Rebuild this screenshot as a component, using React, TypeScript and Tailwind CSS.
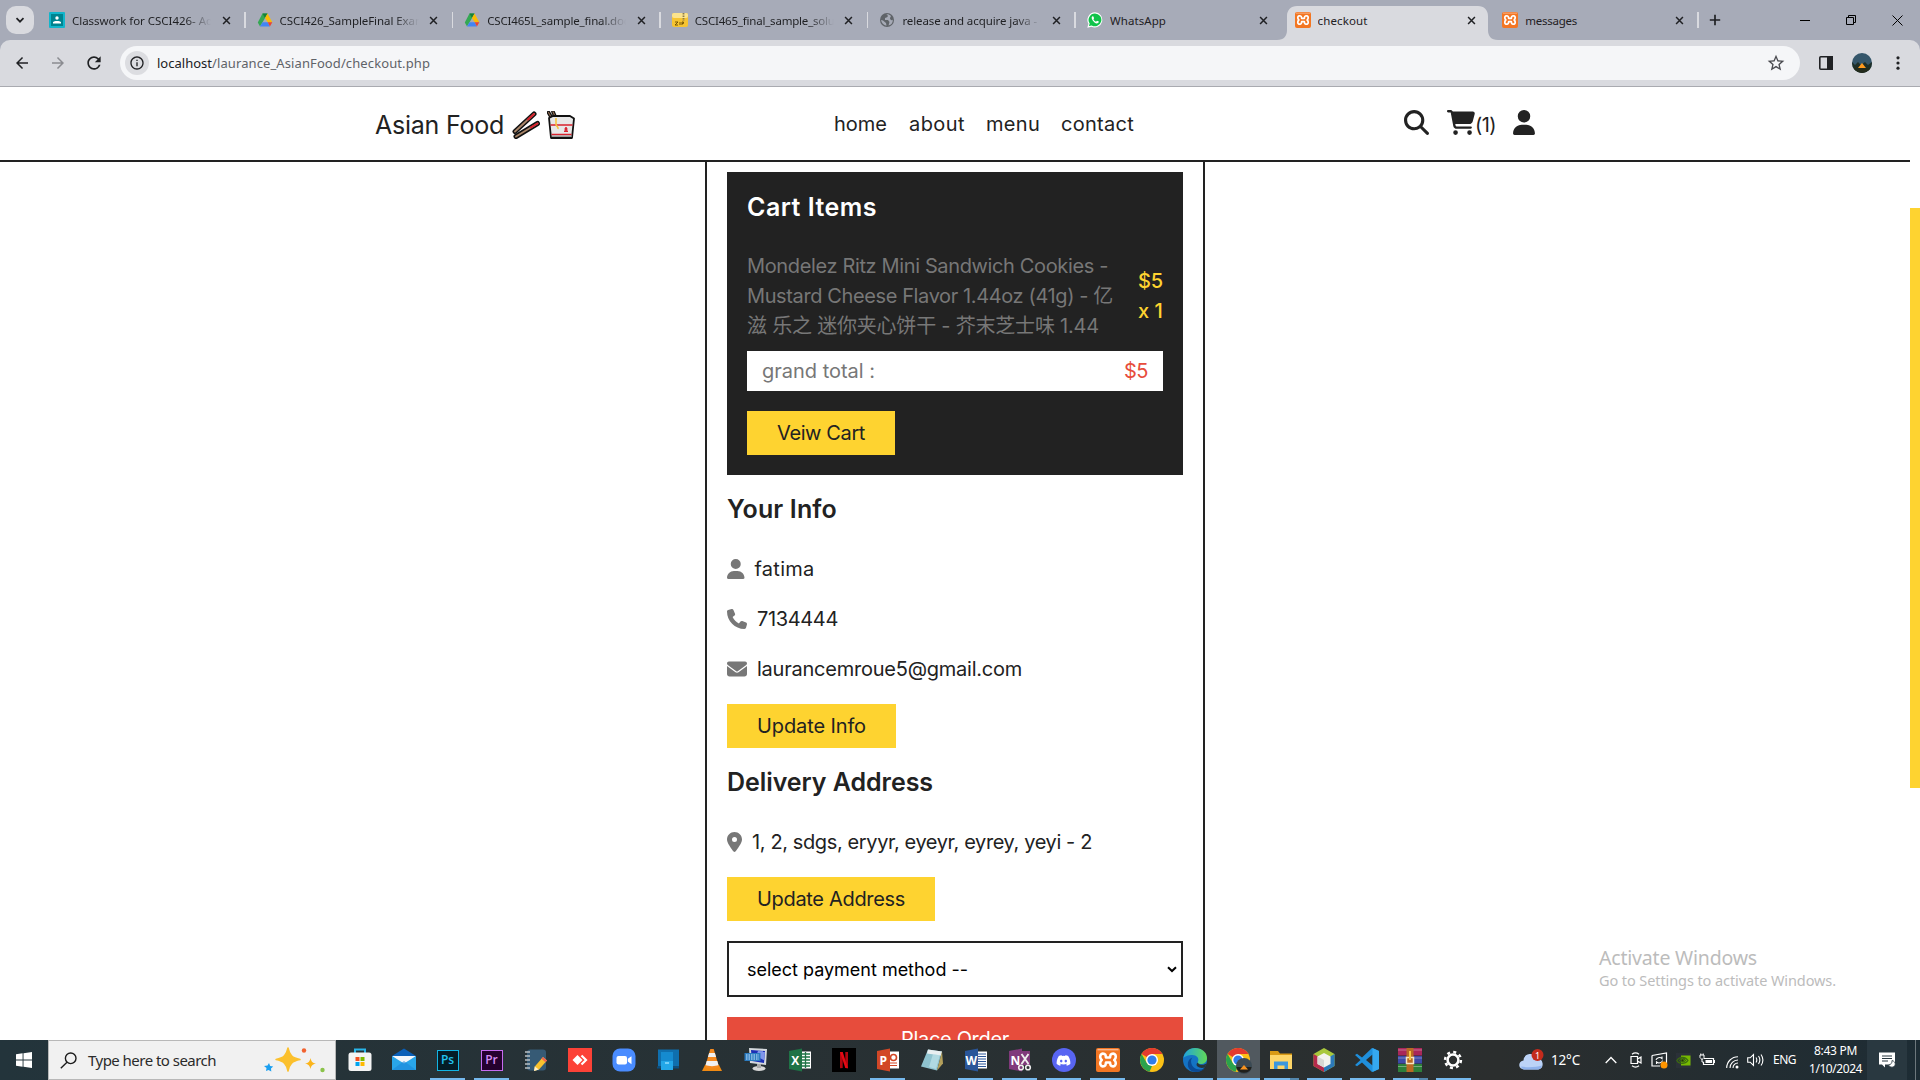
import React, { useLayoutEffect, useRef, useState } from "react";
import {
  FaMagnifyingGlass,
  FaCartShopping,
  FaUser,
  FaPhone,
  FaEnvelope,
  FaLocationDot,
  FaDiscord,
} from "react-icons/fa6";
import { MdArrowBack, MdArrowForward, MdRefresh, MdStarOutline, MdInfoOutline } from "react-icons/md";

/** One line of text whose tracking is adjusted so that it fills a given width. */
function Fit({ w, className = "", children }: { w: number; className?: string; children: string }) {
  const ref = useRef<HTMLSpanElement>(null);
  const [track, setTrack] = useState(0);
  useLayoutEffect(() => {
    const el = ref.current;
    if (!el) return;
    const natural = el.getBoundingClientRect().width - track * children.length;
    setTrack((w - natural) / children.length);
  }, [w, children]);
  return (
    <span ref={ref} className={"inline-block shrink-0 whitespace-pre " + className} style={{ letterSpacing: track + "px" }}>
      {children}
    </span>
  );
}

/* ---------- Favicons ---------- */

const Classroom = () => (
  <svg viewBox="0 0 16 16" className="size-4">
    <rect width="16" height="16" rx="1" fill="#12b5cb" />
    <rect x="2" y="2" width="12" height="12" fill="#00838f" />
    <circle cx="8" cy="6" r="1.700" fill="#fff" />
    <path d="M4 11.500V10C5 8.500 11 8.500 12 10v1.500z" fill="#fff" />
  </svg>
);
const Drive = () => (
  <svg viewBox="0 0 16 16" className="size-4">
    <path d="M5.500 1.500h5L6 9.500 3 14.500.8 10.500z" fill="#34a853" />
    <path d="M5.500 1.500h5l-2.500 4.500z" fill="#188038" />
    <path d="M10.500 1.500 15.300 10.300h-4.600L8 6z" fill="#fbbc04" />
    <path d="M5.500 10.300h5.200l2.200 4.200H3z" fill="#4285f4" />
    <path d="M10.700 10.300h4.600l-2.400 4.200z" fill="#ea4335" />
  </svg>
);
const Zip = () => (
  <svg viewBox="0 0 16 16" className="size-4">
    <rect x="0" y="1" width="16" height="14" rx="2" fill="#f6c431" />
    <rect x="0" y="1" width="16" height="5" rx="2" fill="#fbe38d" />
    <path d="M11.500 1v8" stroke="#8a7a4a" strokeWidth="1.800" strokeDasharray="1.500 1" />
    <path d="M3 10h3l-3 3h3M8 10v3M10 13v-3h1.500v1.500H10" stroke="#6b4d00" fill="none" strokeWidth=".9" />
  </svg>
);
const Globe = () => (
  <svg viewBox="0 0 16 16" className="size-4">
    <circle cx="8" cy="8" r="7" fill="#5f6368" />
    <path d="M7 2.300c2 .7 2.500 2 1 3l-2 .7v2h3l1.500 2-1 3.500c3-.5 4.500-3 4.300-6C13 9 11 8 11 6l1-2C10.500 2.500 9 2 7 2.300zM2 8c.5 3 2.500 5.300 5.500 5.800L7 11 4 8.500z" fill="#a6aab6" />
  </svg>
);
const WhatsFav = () => (
  <svg viewBox="0 0 16 16" className="size-4">
    <path d="M8 .3a7.600 7.600 0 0 0-6.500 11.500L.3 15.700l4-1A7.600 7.600 0 1 0 8 .3z" fill="#fff" />
    <path d="M8 1.500a6.400 6.400 0 0 0-5.300 10l-.8 2.600 2.800-.7A6.400 6.400 0 1 0 8 1.500z" fill="#10c34a" />
    <path d="M5.400 4.300c-1 .7-1 2.100 0 3.700 1.300 2.200 3.500 3.800 5.200 3.300 1-.4 1.300-1 1.200-1.700L10 8.700l-1 1C7.800 9.200 6.900 8.300 6.400 7.200l.7-.9-.7-1.900z" fill="#fff" />
  </svg>
);
const Xampp = ({ big = false }: { big?: boolean }) => (
  <span className={"flex items-center justify-center rounded-[2px] bg-[#f37623] text-white " + (big ? "size-6" : "size-4")}>
    <svg viewBox="0 0 24 24" className={big ? "size-6" : "size-4"}>
      <path d="M1.500 1.700h21" stroke="#f9b48a" strokeWidth="1.400" />
      <path
        d="M8.500 6C6 5 4.200 6.400 4.200 8.800c0 1.300.6 2.400 1.600 3.200-1 .8-1.600 1.900-1.600 3.200 0 2.400 1.800 3.800 4.300 2.800 1.500-.6 1.300-2.400 1.500-3.500h4c.2 1.100 0 2.900 1.500 3.500 2.500 1 4.300-.4 4.300-2.800 0-1.300-.6-2.400-1.600-3.200 1-.8 1.600-1.900 1.600-3.200C19.800 6.400 18 5 15.500 6c-1.500.6-1.300 2.400-1.500 3.500h-4C9.800 8.400 10 6.600 8.500 6z"
        fill="none"
        stroke="#fff"
        strokeWidth="2.600"
        strokeLinejoin="round"
      />
    </svg>
  </span>
);

const Cross = ({ className = "" }: { className?: string }) => (
  <svg viewBox="0 0 10 10" className={className}>
    <path d="M1.200 1.200l7.600 7.600M8.800 1.200l-7.600 7.600" stroke="#202124" strokeWidth="1.700" />
  </svg>
);

/* ---------- Browser chrome ---------- */

type TabData = { icon: React.ReactNode; title: string; w: number; fade?: boolean; sep?: boolean; active?: boolean };

const tabs: TabData[] = [
  { icon: <Classroom />, title: "Classwork for CSCI426- Ad", w: 141, fade: true, sep: true },
  { icon: <Drive />, title: "CSCI426_SampleFinal Exam", w: 146, fade: true, sep: true },
  { icon: <Drive />, title: "CSCI465L_sample_final.doc", w: 142, fade: true, sep: true },
  { icon: <Zip />, title: "CSCI465_final_sample_solu", w: 140, fade: true, sep: true },
  { icon: <Globe />, title: "release and acquire java - G", w: 146, fade: true, sep: true },
  { icon: <WhatsFav />, title: "WhatsApp", w: 56 },
  { icon: <Xampp />, title: "checkout", w: 50, active: true },
  { icon: <Xampp />, title: "messages", w: 52, sep: true },
];

function Tab({ t }: { t: TabData }) {
  return (
    <div className="relative flex h-10 w-[207.6px] shrink-0 items-center pl-[12px]">
      {t.active && (
        <svg viewBox="0 0 222 34" className="absolute -left-[6px] top-[6px] h-[34px] w-[222px]">
          <path d="M0 34C7 34 10 30 10 24V10C10 4 14 0 20 0H201C207 0 211 4 211 10V24C211 30 214 34 221 34z" fill="#d9dadf" />
        </svg>
      )}
      <span className="relative">{t.icon}</span>
      <div
        className={
          "relative ml-[7px] w-[139px] overflow-hidden pt-px text-[11.500px] leading-5 text-[#1f2023] " +
          (t.fade ? "[mask-image:linear-gradient(to_right,black_82%,transparent_100%)]" : "")
        }
      >
        <Fit w={t.w}>{t.title}</Fit>
      </div>
      <Cross className="relative ml-[10.5px] size-[9px]" />
      {t.sep && <span className="ml-auto h-4 w-[1.500px] translate-x-px bg-[#d9dadf]" />}
    </div>
  );
}

function BrowserChrome() {
  return (
    <div className="h-[87px] shrink-0 bg-[#a7abb8] font-['Noto_Sans',sans-serif]">
      <div className="flex h-10 items-center">
        <div className="ml-[6px] flex size-7 items-center justify-center rounded-[10px] bg-[#d9dadf]">
          <svg viewBox="0 0 10 10" className="size-[10px]">
            <path d="M1.500 3.200L5 6.700l3.500-3.500" fill="none" stroke="#202124" strokeWidth="1.700" />
          </svg>
        </div>
        <div className="ml-[3px] flex">
          {tabs.map((t, i) => (
            <Tab key={i} t={t} />
          ))}
        </div>
        <svg viewBox="0 0 12 12" className="ml-[11px] size-3">
          <path d="M6 .8v10.400M.8 6h10.400" stroke="#202124" strokeWidth="1.700" />
        </svg>
        <svg viewBox="0 0 10 10" className="ml-auto mr-9 size-[10px]">
          <path d="M0 5.500h10" stroke="#000" />
        </svg>
        <svg viewBox="0 0 10 10" className="mr-9 size-[10px]">
          <path d="M.5 2.500h7v7h-7zM2.500 2.500v-2h7v7h-2" fill="none" stroke="#000" />
        </svg>
        <svg viewBox="0 0 11 11" className="mr-[17px] size-[11px]">
          <path d="M.5 .5l10 10M10.500 .5l-10 10" stroke="#000" />
        </svg>
      </div>
      <div className="flex h-[47px] items-center rounded-t-[10px] border-b border-[#a9aab0] bg-[#d9dadf]">
        <MdArrowBack className="ml-[13px] size-[18px] text-[#202124]" />
        <MdArrowForward className="ml-[18px] size-[18px] text-[#8b8c91]" />
        <MdRefresh className="ml-[17px] size-[20px] text-[#202124]" />
        <div className="ml-[16px] flex h-[34px] w-[1680px] items-center rounded-full bg-[#f5f6f8]">
          <span className="ml-[5px] flex size-6 items-center justify-center rounded-full bg-[#dcdde1]">
            <MdInfoOutline className="size-4 text-[#202124]" />
          </span>
          <span className="ml-[8px] flex text-[13px] leading-5 text-[#5f6368]">
            <Fit w={55} className="text-[#202124]">localhost</Fit>
            <Fit w={218}>/laurance_AsianFood/checkout.php</Fit>
          </span>
          <MdStarOutline className="ml-auto mr-[14px] size-5 text-[#4a4b50]" />
        </div>
        <svg viewBox="0 0 14 14" className="ml-[19px] size-[14px]">
          <rect x=".8" y=".8" width="12.400" height="12.400" rx="1" fill="none" stroke="#202124" strokeWidth="1.600" />
          <path d="M8 0h6v14H8z" fill="#202124" />
        </svg>
        <svg viewBox="0 0 20 20" className="ml-[19px] size-5">
          <clipPath id="avatar">
            <circle cx="10" cy="10" r="10" />
          </clipPath>
          <g clipPath="url(#avatar)">
            <rect width="20" height="20" fill="#35566b" />
            <path d="M0 9l3 3 3-3 3 3 4-3 3 3 4-3v11H0z" fill="#1f2f28" />
            <path d="M10 10l4 5H6z" fill="#ff9a1f" />
            <rect y="15" width="20" height="5" fill="#232b1c" />
          </g>
        </svg>
        <svg viewBox="0 0 4 14" className="ml-[24px] h-[14px] w-1">
          <circle cx="2" cy="1.800" r="1.600" fill="#202124" />
          <circle cx="2" cy="7" r="1.600" fill="#202124" />
          <circle cx="2" cy="12.200" r="1.600" fill="#202124" />
        </svg>
      </div>
    </div>
  );
}

/* ---------- Shop page ---------- */

const Chopsticks = () => (
  <svg viewBox="0 0 28 28" className="size-7">
    <g strokeLinecap="round">
      <path d="M22 3L3 20.500" stroke="#111" strokeWidth="5" />
      <path d="M25.500 12.500L4 25.500" stroke="#111" strokeWidth="5" />
      <path d="M22 3L3 20.500" stroke="#a88467" strokeWidth="1.900" />
      <path d="M25.500 12.500L4 25.500" stroke="#a88467" strokeWidth="1.900" />
      <path d="M22 3l-6 5.500M25.500 12.500l-6.500 3.900" stroke="#d9222e" strokeWidth="2" />
    </g>
  </svg>
);
const Takeout = () => (
  <svg viewBox="0 0 28 28" className="size-7">
    <path d="M1.500 1.500l4 7M6 .8l3 7" stroke="#111" strokeWidth="3.600" strokeLinecap="round" />
    <path d="M1.500 1.500l4 7M6 .8l3 7" stroke="#8d6a50" strokeWidth="1.200" strokeLinecap="round" />
    <path d="M2 7l4-2h17l4 2.500L25 27H4z" fill="#e8e8e8" stroke="#111" strokeWidth="1.800" strokeLinejoin="round" />
    <path d="M3.500 14h22M4.500 23.500h20" stroke="#d9222e" strokeWidth="1.300" />
    <path d="M5 24.500h19.500v1.500H5z" fill="#9b9b9b" />
    <path d="M9 7v6c0 3 2.500 2 2 5" stroke="#f5c542" strokeWidth="1.600" fill="none" />
    <path d="M19 16v5M17 20.300h4M17.500 18h3" stroke="#d9222e" strokeWidth="1.600" />
  </svg>
);

function Header() {
  return (
    <header className="flex h-[75px] w-[1910px] shrink-0 items-center border-b-2 border-[#222] bg-white text-[#222]">
      <div className="ml-[375px] flex w-[200px] items-center pt-[3px]">
        <Fit w={129} className="text-[25px] leading-8">Asian Food</Fit>
        <span className="ml-[8px]"><Chopsticks /></span>
        <span className="ml-[7px]"><Takeout /></span>
      </div>
      <nav className="ml-[259px] flex pt-px text-[20px] leading-[30px]">
        <Fit w={53} className="mr-[22px]">home</Fit>
        <Fit w={56} className="mr-[21px]">about</Fit>
        <Fit w={54} className="mr-[21px]">menu</Fit>
        <Fit w={73}>contact</Fit>
      </nav>
      <div className="ml-[270px] flex items-center pb-[2px]">
        <FaMagnifyingGlass className="size-[25px]" />
        <FaCartShopping className="ml-[18px] h-[25px] w-[28px]" />
        <Fit w={21} className="mt-[5px] text-[20px] leading-[30px]">(1)</Fit>
        <FaUser className="ml-[17px] h-[25px] w-[22px]" />
      </div>
    </header>
  );
}

const Heading = ({ w, children, className = "" }: { w: number; children: string; className?: string }) => (
  <h3 className={"flex h-[30px] text-[25px] font-semibold leading-[30px] " + className}>
    <Fit w={w}>{children}</Fit>
  </h3>
);

const YellowButton = ({ w, children }: { w: number; children: string }) => (
  <button className="flex h-11 items-center bg-[#fed330] px-[30px] text-[20px] leading-6 text-[#222]">
    <Fit w={w}>{children}</Fit>
  </button>
);

const InfoRow = ({ icon, w, children }: { icon: React.ReactNode; w: number; children: string }) => (
  <p className="mb-5 flex h-[30px] items-center gap-[10px] text-[20px] leading-[30px] text-[#222]">
    <span className="-mt-px text-[#777]">{icon}</span>
    <Fit w={w}>{children}</Fit>
  </p>
);

function Checkout() {
  return (
    <section className="ml-[705px] w-[500px] border-x-2 border-[#222] px-5 pt-[10px]">
      <div className="h-[303px] bg-[#222] p-5">
        <Heading w={130} className="text-white">Cart Items</Heading>
        <div className="mt-[29px] flex items-center justify-between text-[20px] leading-[30px]">
          <div className="flex flex-col items-start text-[#777]">
            <Fit w={361}>Mondelez Ritz Mini Sandwich Cookies -</Fit>
            <Fit w={366} className="h-[30px] font-['Inter','Noto_Sans_CJK_SC',sans-serif]">Mustard Cheese Flavor 1.44oz (41g) - 亿</Fit>
            <Fit w={352} className="h-[30px] font-['Inter','Noto_Sans_CJK_SC',sans-serif]">滋 乐之 迷你夹心饼干 - 芥末芝士味 1.44</Fit>
          </div>
          <div className="flex flex-col items-end font-medium text-[#fed330]">
            <Fit w={25}>$5</Fit>
            <Fit w={25}>x 1</Fit>
          </div>
        </div>
        <div className="mt-[10px] flex h-10 items-center justify-between bg-white px-[15px] text-[20px] leading-[30px]">
          <Fit w={113} className="text-[#777]">grand total :</Fit>
          <Fit w={24} className="text-[#e74c3c]">$5</Fit>
        </div>
        <div className="mt-5 flex">
          <YellowButton w={88}>Veiw Cart</YellowButton>
        </div>
      </div>
      <Heading w={110} className="mb-[30px] mt-[19px] text-[#222]">Your Info</Heading>
      <InfoRow icon={<FaUser className="h-5 w-[17.500px]" />} w={60}>fatima</InfoRow>
      <InfoRow icon={<FaPhone className="size-5" />} w={81}>7134444</InfoRow>
      <InfoRow icon={<FaEnvelope className="size-5" />} w={265}>laurancemroue5@gmail.com</InfoRow>
      <div className="flex">
        <YellowButton w={109}>Update Info</YellowButton>
      </div>
      <Heading w={206} className="mb-[30px] mt-[19px] text-[#222]">Delivery Address</Heading>
      <InfoRow icon={<FaLocationDot className="h-5 w-[15px]" />} w={340}>1, 2, sdgs, eryyr, eyeyr, eyrey, yeyi - 2</InfoRow>
      <div className="flex">
        <YellowButton w={148}>Update Address</YellowButton>
      </div>
      <div className="mt-5 flex h-14 items-center border-2 border-[#222] pl-[18px] pr-[4px] text-[18px] text-black">
        <Fit w={221}>select payment method --</Fit>
        <svg viewBox="0 0 10 7" className="ml-auto h-[7px] w-[10px]">
          <path d="M1 1.200l4 3.800 4-3.800" fill="none" stroke="#000" strokeWidth="2" />
        </svg>
      </div>
      <button className="mt-5 flex h-11 w-full items-center justify-center bg-[#e74c3c] text-[20px] leading-6 text-white">
        <Fit w={108}>Place Order</Fit>
      </button>
    </section>
  );
}

/* ---------- Taskbar icons ---------- */

const I = ({ children }: { children: React.ReactNode }) => (
  <svg viewBox="0 0 24 24" className="size-6">{children}</svg>
);
const Store = () => (
  <I>
    <path d="M7 6V1.500h10V6" fill="none" stroke="#29b6ea" strokeWidth="2" />
    <rect x=".5" y="4.500" width="23" height="18.500" rx="2.500" fill="#f4f4f4" />
    <path d="M7.500 9h4v4h-4z" fill="#f25022" /><path d="M12.500 9h4v4h-4z" fill="#7fba00" />
    <path d="M7.500 14h4v4h-4z" fill="#00a4ef" /><path d="M12.500 14h4v4h-4z" fill="#ffb900" />
  </I>
);
const Mail = () => (
  <I>
    <path d="M0 8L12 .5 24 8v4H0z" fill="#0a5fb8" />
    <path d="M0 8h24L12 18z" fill="#f2f6fa" />
    <path d="M0 8l12 7.500L24 8v14H0z" fill="#29a6ea" />
    <path d="M0 22l12-9 12 9z" fill="#1b87d8" opacity=".6" />
  </I>
);
const Adobe = ({ kind }: { kind: "Ps" | "Pr" }) => (
  <span
    className={
      "flex h-[21px] w-[22px] items-center justify-center border-[1.500px] font-['Open_Sans',sans-serif] text-[12px] font-semibold leading-none " +
      (kind === "Ps" ? "border-[#12b5e5] bg-[#041d27] text-[#22c3ee]" : "border-[#c56bf0] bg-[#25002f] text-[#d48bf5]")
    }
  >
    {kind}
  </span>
);
const NotePen = () => (
  <I>
    <rect x="3" y="1.500" width="19" height="21" rx="3" fill="#365a75" />
    <path d="M1 4h5M1 8h5M1 12h5M1 16h5M1 20h5" stroke="#b9c0c4" strokeWidth="1.500" />
    <path d="M19 9l4 3.500-8 9-5 1.500.8-4.500z" fill="#f9c22e" />
    <path d="M19 9l4 3.500-1.500 1.800-4-3.500z" fill="#ef6351" />
    <path d="M10.800 18.500l4 3L10 23z" fill="#fff0cf" />
  </I>
);
const AnyDesk = () => (
  <I>
    <path d="M0 0h24v24H0z" fill="#fc4237" />
    <path d="M9.500 7l5 5-5 5-5-5z" fill="#fff" />
    <path d="M13.500 7.500l4.500 4.500-4.500 4.500" fill="none" stroke="#fff" strokeWidth="2.200" />
  </I>
);
const Zoom = () => (
  <I>
    <rect x=".5" y=".5" width="23" height="23" rx="7.500" fill="#4a8cff" />
    <rect x="4.500" y="8" width="10.500" height="8.500" rx="2" fill="#fff" />
    <path d="M15.800 10.800l3.700-2.600v8l-3.700-2.600z" fill="#fff" />
  </I>
);
const PhoneLink = () => (
  <I>
    <path d="M2 1.500h21v17H2z" fill="#0f6fae" />
    <path d="M1 18.500h22v2H1z" fill="#0a4f80" />
    <path d="M5 4.500h12V22H5z" fill="#23a7e8" />
    <path d="M5 4.500h12V13H5z" fill="#158bd0" />
    <path d="M9 15h4" stroke="#8fdcff" strokeWidth="1.500" />
  </I>
);
const Vlc = () => (
  <I>
    <path d="M5 17h14l3 6H2z" fill="#f08a13" />
    <path d="M10.300 1h3.400L19 19c-3 2-11 2-14 0z" fill="#f58a1f" />
    <path d="M9.100 5h5.800l1.200 4H7.900zM6.700 13h10.600l1.200 4c-3 1.500-10 1.500-13 0z" fill="#f1f1f1" />
  </I>
);
const RemotePc = () => (
  <I>
    <path d="M5 0l18 1-1 16L6 15z" fill="#d5d9dd" />
    <path d="M7 2l14 1-1 12L8 13z" fill="#1c2fb5" />
    <path d="M14 3l7 .3-.8 9L12 8z" fill="#7f95ea" />
    <path d="M.5 5h16v8H.5z" fill="#2c7cc0" />
    <path d="M2 7h13M2 9h13M2 11h13" stroke="#cde8ff" strokeDasharray="1.500 1" />
    <ellipse cx="15" cy="20.500" rx="6.500" ry="2.500" fill="#d8d8d8" />
    <path d="M13 16h4v4h-4z" fill="#aaa" />
  </I>
);
function Office({ letter, color, kind }: { letter: string; color: string; kind: string }) {
  return (
    <I>
      {kind !== "cut" && <path d="M12 3.500h11v17H12z" fill="#fff" />}
      {kind === "lines" && <path d="M13 6h9M13 8.500h9M13 11h9M13 13.500h9M13 16h9M13 18.500h9" stroke={color} />}
      {kind === "grid" && <path d="M13 6h9M13 9h9M13 12h9M13 15h9M13 18h9M17.500 4v16" stroke={color} strokeWidth="1.300" />}
      {kind === "pie" && (
        <>
          <circle cx="17.500" cy="9.500" r="3" fill="none" stroke={color} strokeWidth="1.600" />
          <path d="M14 15h7M14 17.500h7" stroke={color} strokeWidth="1.200" />
        </>
      )}
      <path d="M1 3l13-2.500v23L1 21z" fill={color} />
      <text x="7.300" y="16.500" textAnchor="middle" fontSize="12" fontWeight="700" fill="#fff" fontFamily="Open Sans">
        {letter}
      </text>
      {kind === "cut" && (
        <>
          <path d="M14 3h8v14h-8z" fill={color} />
          <path d="M13.500 6l7 10M20.500 6l-7 10" stroke="#eee" strokeWidth="1.900" />
          <circle cx="13" cy="19.500" r="2.300" fill="none" stroke="#eee" strokeWidth="1.600" />
          <circle cx="20" cy="19.500" r="2.300" fill="none" stroke="#eee" strokeWidth="1.600" />
        </>
      )}
    </I>
  );
}
const Netflix = () => (
  <I>
    <path d="M0 0h24v24H0z" fill="#000" />
    <path d="M8 4h2.700v16L8 20.300zM13.300 4H16v16.300l-2.700-.3z" fill="#b1060f" />
    <path d="M8 4h2.700L16 20.300l-2.700-.3z" fill="#e50914" />
  </I>
);
const Notepad = () => (
  <I>
    <path d="M8 1.500l14 2-5 19-16-4z" fill="#8fc3cf" />
    <path d="M8 1.500l14 2-1 4-14-2z" fill="#e8eef0" />
    <path d="M22 3.500l1 12-6 7z" fill="#b4a05c" />
    <path d="M13 6l7 1-4 14-7-2z" fill="#c7e7ec" opacity=".6" />
  </I>
);
const DiscordIcon = () => (
  <span className="flex size-6 items-center justify-center rounded-full bg-[#5865f2]">
    <FaDiscord className="size-[15px] text-white" />
  </span>
);
const chromeShapes = (
  <>
    <circle cx="12" cy="12" r="12" fill="#fbc116" />
    <path d="M12 12L1.600 6A12 12 0 0 1 22.400 6H12z" fill="#e33b2e" />
    <path d="M1.600 6l5.200 9L12 18l-2.500 5.700A12 12 0 0 1 1.600 6z" fill="#2ba24c" />
    <circle cx="12" cy="12" r="6" fill="#fff" />
    <circle cx="12" cy="12" r="4.600" fill="#2f7de9" />
  </>
);
const Chrome = () => <I>{chromeShapes}</I>;
const ChromeProfile = () => (
  <svg viewBox="0 0 26 26" className="ml-[2px] mt-[2px] size-[26px]">
    {chromeShapes}
    <circle cx="18" cy="18" r="8" fill="#3b4a54" />
    <path d="M10.300 19h15.400a8 8 0 0 1-15.400 0z" fill="#20201c" />
    <path d="M18 17l4 4.500h-8z" fill="#f79421" />
  </svg>
);
const Edge = () => (
  <I>
    <defs>
      <linearGradient id="edgeTop" x1="0" x2="1">
        <stop offset="0" stopColor="#1fa2dc" />
        <stop offset="1" stopColor="#61d956" />
      </linearGradient>
    </defs>
    <circle cx="12" cy="12" r="12" fill="#1473c4" />
    <path d="M.3 10C1.500 4 6 0 12 0c7 0 12 4.500 12 10 0 4-3 6-6.500 6-2.500 0-3.500-1-2.500-2.500C16.500 10 13.500 7 9.500 7 5 7 1.500 8.500.3 10z" fill="url(#edgeTop)" />
    <path d="M8 13c0 5 4 8.500 9 8.500 2 0 3.500-.5 5-1.500-2 2.500-5.500 4-9 4C7 24 4 19 5 14.500 5.500 12 7.500 10 9.500 9.500 8.500 10.500 8 12 8 13z" fill="#0b4a94" />
    <path d="M14.800 14.500c.5 1.800 3 2.600 5.700 2.200l3-1.200-1.300 3.500c-2.500 1.500-5.700 1-7.700-.5-1.500-1.300-1.200-3 .3-4z" fill="#26343a" />
  </I>
);
const Folder = () => (
  <I>
    <path d="M1 3h8l2 2.500h12V21H1z" fill="#d99a15" />
    <path d="M1 7h22v14H1z" fill="#fdd568" />
    <path d="M5 21v-7.500h14V21h-3.500v-3.500h-7V21z" fill="#3c97dd" />
  </I>
);
const NetBeans = () => (
  <I>
    <path d="M12 0l10.500 6v12L12 24 1.500 18V6z" fill="#a9c83d" />
    <path d="M1.500 6L12 12v12L1.500 18z" fill="#b52a4c" />
    <path d="M22.500 6L12 12v12l10.500-6z" fill="#2b78b8" />
    <path d="M12 5l6.500 3.500v7.500L12 19.500 5.500 16V8.500z" fill="#f3f3ee" />
    <path d="M12 12v7.500L5.500 16V8.500z" fill="#d8d8d4" />
  </I>
);
const Code = () => (
  <I>
    <path d="M17 0l7 3v18l-7 3L7 14.500l-5 3.800L0 17l5.500-5L0 7l2-1.300 5 3.800zM17.500 6.500L11 12l6.500 5.500z" fill="#1f8fdc" />
    <path d="M17.500 0L24 3v18l-6.500 3z" fill="#35a8f0" />
  </I>
);
const Rar = () => (
  <I>
    <path d="M0 0h24v7.500H0z" fill="#a8275a" />
    <path d="M0 8h24v7.500H0z" fill="#3c4aa8" />
    <path d="M0 16h24v8H0z" fill="#2c7f3a" />
    <path d="M0 2h24M0 10h24M0 18.500h24" stroke="#fff" strokeOpacity=".35" />
    <path d="M8.500 0h7v24h-7z" fill="#b96a24" />
    <path d="M8.500 9.500h7v6h-7z" fill="none" stroke="#f3e6c4" strokeWidth="1.500" />
    <path d="M12 3v9" stroke="#f5c542" strokeWidth="2" />
  </I>
);
const Gear = () => (
  <svg viewBox="0 0 24 24" className="size-[20px]">
    <circle cx="12" cy="12" r="6.500" fill="none" stroke="#fff" strokeWidth="3" />
    <circle cx="12" cy="12" r="9.500" fill="none" stroke="#fff" strokeWidth="3" strokeDasharray="3.600 3.860" />
  </svg>
);

type AppEntry = { icon: React.ReactNode; open?: boolean; active?: boolean; multi?: boolean };
const apps: AppEntry[] = [
  { icon: <Store /> },
  { icon: <Mail /> },
  { icon: <Adobe kind="Ps" />, open: true },
  { icon: <Adobe kind="Pr" />, open: true },
  { icon: <NotePen /> },
  { icon: <AnyDesk /> },
  { icon: <Zoom /> },
  { icon: <PhoneLink /> },
  { icon: <Vlc /> },
  { icon: <RemotePc /> },
  { icon: <Office letter="X" color="#1f7346" kind="grid" /> },
  { icon: <Netflix /> },
  { icon: <Office letter="P" color="#d24726" kind="pie" />, open: true },
  { icon: <Notepad /> },
  { icon: <Office letter="W" color="#2a5699" kind="lines" />, open: true },
  { icon: <Office letter="N" color="#80397b" kind="cut" />, open: true },
  { icon: <DiscordIcon />, open: true },
  { icon: <Xampp big />, open: true },
  { icon: <Chrome /> },
];
const openApps: AppEntry[] = [
  { icon: <Edge />, open: true },
  { icon: <ChromeProfile />, open: true, active: true },
  { icon: <Folder />, open: true, multi: true },
  { icon: <NetBeans />, open: true },
  { icon: <Code />, open: true },
  { icon: <Rar />, open: true, multi: true },
  { icon: <Gear />, open: true },
];

function Slot({ app, className }: { app: AppEntry; className: string }) {
  return (
    <div className={"flex h-10 shrink-0 flex-col items-center " + (app.active ? "bg-[#51595f] " : "") + className}>
      <div className="flex h-[38px] items-center justify-center pt-[2px]">{app.icon}</div>
      {app.open && (
        <div className={"flex h-[2px] " + (app.active ? "w-full" : "w-[35px]")}>
          <span className="flex-1 bg-[#76b9ed]" />
          {app.multi && <span className="w-[9px] bg-[#5487ad]" />}
        </div>
      )}
    </div>
  );
}

function Taskbar() {
  return (
    <footer className="flex h-10 shrink-0 items-center bg-linear-to-r from-[#23343b] via-[#2b2e2e] via-78% to-[#1d2c34] font-['Noto_Sans',sans-serif] text-white">
      <svg viewBox="0 0 16 16" className="ml-4 mr-4 size-4">
        <path d="M0 2.300L6.600 1.300v6.200H0zM7.500 1.200L16 0v7.500H7.500zM0 8.400h6.600v6.300L0 13.700zM7.500 8.400H16V16l-8.500-1.200z" fill="#fff" />
      </svg>
      <div className="flex h-10 w-72 items-center border border-[#b8b8b8] bg-[#f1f1f1] text-[#2b2b2b]">
        <svg viewBox="0 0 17 17" className="ml-[11px] size-[17px]">
          <circle cx="10.700" cy="6.300" r="5.300" fill="none" stroke="#1c1c1c" strokeWidth="1.400" />
          <path d="M7 10.300L.8 16.200" stroke="#1c1c1c" strokeWidth="1.400" />
        </svg>
        <Fit w={128} className="ml-[11px] text-[15px] leading-5">Type here to search</Fit>
        <svg viewBox="0 0 62 26" className="ml-[48px] h-[26px] w-[62px]">
          <path d="M24 1c1.500 7 4 10 12 11.500C28 14 25.500 17 24 24c-1.500-7-4-10-12-11.500C20 11 22.500 8 24 1z" fill="#fbc02d" stroke="#fbc02d" strokeWidth="1.500" strokeLinejoin="round" />
          <path d="M46.500 11c.8 3.500 2 5 5.500 5.500-3.500.8-4.700 2-5.500 5.500-.8-3.500-2-4.700-5.500-5.500 3.500-.5 4.700-2 5.500-5.500z" fill="#fbb41a" />
          <path d="M5 16l1.200 3 3 .5-2.200 2 .3 3L4.500 23 2 24l.5-3L0 19l3.500-.4z" fill="#1a9ff0" />
          <circle cx="40" cy="3.500" r="2.200" fill="#f2622e" />
          <circle cx="58.500" cy="23" r="2.200" fill="#8bc34a" />
        </svg>
      </div>
      <div className="ml-[1.500px] flex">
        {apps.map((a, i) => (
          <Slot key={i} app={a} className="w-11" />
        ))}
        {openApps.map((a, i) => (
          <Slot key={i} app={a} className="w-[43px]" />
        ))}
      </div>
      <div className="ml-auto flex h-10 items-center">
        <svg viewBox="0 0 25 22" className="size-[25px]">
          <path d="M5 20a4.500 4.500 0 0 1-.5-9A7 7 0 0 1 18 9a5.600 5.600 0 0 1 1.500 11z" fill="#bcd3f7" />
          <path d="M2 17c5 1 15 1 21-1a5 5 0 0 1-4 4H5a4 4 0 0 1-3-3z" fill="#8fb2ec" />
          <circle cx="18.500" cy="5.500" r="6" fill="#c42b1c" />
          <text x="18.500" y="9" fontSize="9" textAnchor="middle" fill="#fff">1</text>
        </svg>
        <Fit w={29} className="ml-[7px] text-[13.500px] leading-5">12°C</Fit>
        <svg viewBox="0 0 12 8" className="ml-[25px] h-2 w-3">
          <path d="M.7 7L6 1.500 11.300 7" fill="none" stroke="#fff" strokeWidth="1.300" />
        </svg>
        <svg viewBox="0 0 12 16" className="ml-[13px] h-4 w-3">
          <path d="M1 4.500h6.500v7H1zM7.500 7l3.500-2v6L7.500 9M2 2.200C4 .7 7 .7 9 2.200M2 13.800c2 1.500 5 1.500 7 0" fill="none" stroke="#fff" strokeWidth="1.200" />
        </svg>
        <svg viewBox="0 0 17 17" className="ml-[9px] size-[17px]">
          <path d="M1 3.500L15.500 1v10M1 3.500V14h8" fill="none" stroke="#fff" strokeWidth="1.200" />
          <path d="M5 8a3.500 3 0 0 1 6-1.500V4.500M11.500 8.500a3.500 3 0 0 1-6 1.500v2" fill="none" stroke="#fff" strokeWidth="1.100" />
          <circle cx="13" cy="13" r="3.500" fill="#ff9500" />
        </svg>
        <svg viewBox="0 0 15 15" className="ml-[8px] size-[15px]">
          <path d="M0 0h15v15H0z" fill="#2b3138" />
          <path d="M5 2.500h9.500v10H5z" fill="#76b900" />
          <path d="M.8 7.500C3 3.500 9 3 12 7.500c-3 4-9 4-11.200 0zM3.500 7.500c1.500-2.500 4.500-2.500 6 0-1.500 2-4.500 2-6 0z" fill="none" stroke="#3c6a10" strokeWidth="1.200" />
          <circle cx="6.500" cy="7.400" r="1.200" fill="#20350c" />
        </svg>
        <svg viewBox="0 0 16 14" className="ml-[8px] h-[14px] w-4">
          <path d="M5 5.500h9.500v6H4.500V9" fill="none" stroke="#fff" strokeWidth="1.200" />
          <path d="M6.500 7H13v3H6.500zM15 7h1v3h-1z" fill="#fff" />
          <path d="M1 2h4v2.500L3 6.500 1 4.500zM1.800 2V.5M4.200 2V.5M3 6v3h1.500" fill="none" stroke="#fff" strokeWidth="1" />
        </svg>
        <svg viewBox="0 0 13 13" className="ml-[11px] mt-1 size-[13px]">
          <path d="M.7 12A11.300 11.300 0 0 1 12 .7M4 12A8 8 0 0 1 12 4M7 12a5 5 0 0 1 5-5" fill="none" stroke="#fff" strokeWidth="1.100" />
          <circle cx="11" cy="11" r="1.500" fill="#fff" />
        </svg>
        <svg viewBox="0 0 17 14" className="ml-[8px] h-[14px] w-[17px]">
          <path d="M.7 4.800h2.500L6.500 1.500v11L3.200 9.200H.7zM9 4.500c1 1.500 1 3.500 0 5M11.500 3c1.700 2.500 1.700 5.500 0 8M14 1.500c2.300 3.300 2.300 7.700 0 11" fill="none" stroke="#fff" strokeWidth="1.100" />
        </svg>
        <Fit w={23} className="ml-[9px] text-[12px] leading-5">ENG</Fit>
        <div className="ml-[13px] flex w-[53px] flex-col items-center text-[12px] leading-[18px]">
          <Fit w={43}>8:43 PM</Fit>
          <Fit w={53}>1/10/2024</Fit>
        </div>
        <div className="ml-[5px] flex h-10 w-10 items-center justify-center bg-[#293840]">
          <svg viewBox="0 0 17 16" className="size-[17px]">
            <path d="M0 0h16v12H6v3l-3-3H0z" fill="#fff" />
            <path d="M3 3.500h10M3 6h10M3 8.500h6" stroke="#293840" strokeWidth="1.100" />
            <path d="M13 8c.3 2.500-1 4-3.500 4.500 1 3 6.500 3 6.800-1 0-1.500-1.300-3-3.300-3.500z" fill="#fff" stroke="#293840" strokeWidth=".8" />
          </svg>
        </div>
        <span className="ml-2 mr-[4px] h-10 w-px bg-[#6d777c]" />
      </div>
    </footer>
  );
}

export default function App() {
  return (
    <div className="flex h-[1080px] w-[1920px] flex-col overflow-hidden bg-white font-['Inter',sans-serif]">
      <BrowserChrome />
      <main className="relative flex h-[953px] shrink-0 justify-between overflow-hidden">
        <div className="flex flex-col">
          <Header />
          <Checkout />
        </div>
        <div className="w-[10px] pt-[121px]">
          <div className="h-[580px] bg-[#fed330]" />
        </div>
        <div className="absolute left-[1599px] top-[857px] flex flex-col items-start font-['Noto_Sans',sans-serif] text-[#bcbcbc]">
          <Fit w={158} className="text-[19.500px] leading-7">Activate Windows</Fit>
          <Fit w={237} className="-mt-px text-[14.500px] leading-[18px]">Go to Settings to activate Windows.</Fit>
        </div>
      </main>
      <Taskbar />
    </div>
  );
}
